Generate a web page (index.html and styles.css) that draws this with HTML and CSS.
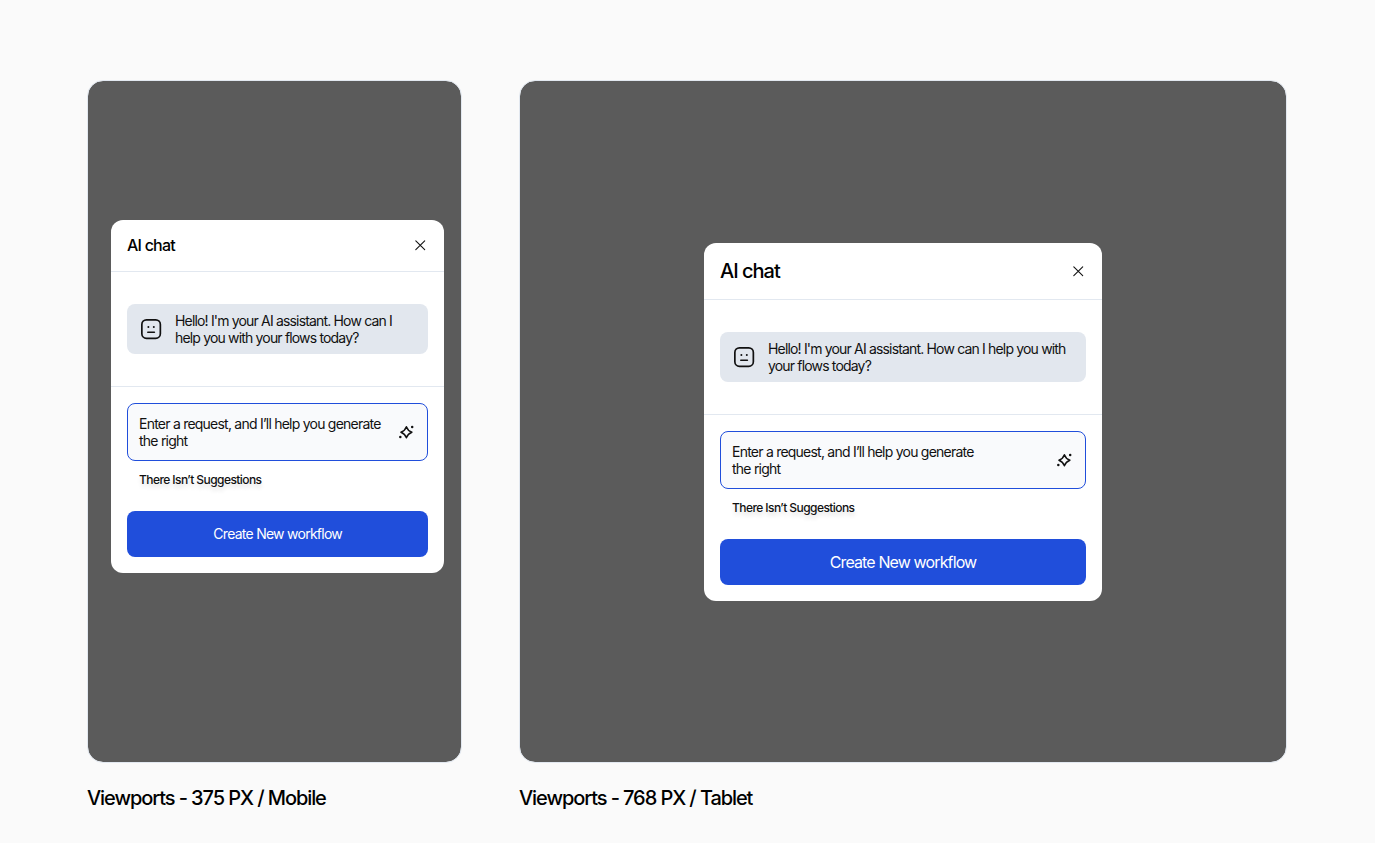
FILE: index.html
```
<!DOCTYPE html>
<html lang="en">
<head>
<meta charset="utf-8">
<title>AI chat viewports</title>
<link rel="stylesheet" href="styles.css">
</head>
<body>
<svg class="sprite" aria-hidden="true">
  <symbol id="close" viewBox="0 0 12 12"><path d="M1.8 1.8 10.7 10.7M10.7 1.8 1.8 10.7" fill="none" stroke="currentColor" stroke-width="1.1" stroke-linecap="round"/></symbol>
  <symbol id="bot" viewBox="0 0 22 22"><rect x="1.85" y="1.85" width="18.5" height="18.5" rx="4.6" fill="none" stroke="currentColor" stroke-width="1.7"/><circle cx="8.4" cy="9.1" r="1" fill="currentColor"/><circle cx="13.8" cy="9.1" r="1" fill="currentColor"/><path d="M7.8 14.2h6.6" stroke="currentColor" stroke-width="1.6" stroke-linecap="round"/></symbol>
  <symbol id="sparkle" viewBox="0 0 16 16"><path d="M8.4 2.7C9.4 5.6 11 7.2 13.9 8.2C11 9.2 9.4 10.8 8.4 13.7C7.4 10.8 5.8 9.2 2.9 8.2C5.8 7.2 7.4 5.6 8.4 2.7Z" fill="none" stroke="currentColor" stroke-width="1.45" stroke-linejoin="round"/><circle cx="14.2" cy="2.9" r="1.25" fill="currentColor"/><circle cx="2.3" cy="13.1" r="1.25" fill="currentColor"/></symbol>
</svg>
<main class="board">
  <figure class="viewport viewport--mobile">
    <div class="frame">
      <section class="modal">
        <header class="modal-head"><h2 class="title">AI chat</h2><svg class="icon-close"><use href="#close"/></svg></header>
        <div class="chat">
          <div class="bubble"><svg class="icon-bot"><use href="#bot"/></svg><p class="message">Hello! I'm your AI assistant. How can I<br>help you with your flows today?</p></div>
        </div>
        <div class="composer">
          <div class="prompt"><p class="prompt-text">Enter a request, and I’ll help you generate<br>the right</p><svg class="icon-sparkle"><use href="#sparkle"/></svg></div>
          <p class="hint">There Isn’t Suggestions</p>
          <button class="create"><span>Create New workflow</span></button>
        </div>
      </section>
    </div>
    <figcaption class="caption"><span>Viewports - 375 PX / Mobile</span></figcaption>
  </figure>
  <figure class="viewport viewport--tablet">
    <div class="frame">
      <section class="modal">
        <header class="modal-head"><h2 class="title">AI chat</h2><svg class="icon-close"><use href="#close"/></svg></header>
        <div class="chat">
          <div class="bubble"><svg class="icon-bot"><use href="#bot"/></svg><p class="message">Hello! I'm your AI assistant. How can I help you with<br>your flows today?</p></div>
        </div>
        <div class="composer">
          <div class="prompt"><p class="prompt-text">Enter a request, and I’ll help you generate<br>the right</p><svg class="icon-sparkle"><use href="#sparkle"/></svg></div>
          <p class="hint">There Isn’t Suggestions</p>
          <button class="create"><span>Create New workflow</span></button>
        </div>
      </section>
    </div>
    <figcaption class="caption"><span>Viewports - 768 PX / Tablet</span></figcaption>
  </figure>
</main>
</body>
</html>
```
FILE: styles.css
```
* { box-sizing: border-box; margin: 0; padding: 0; }
body { background: #fafafa; color: #111; font-family: Inter, "Liberation Sans", sans-serif; }
.sprite { display: none; }
.board { display: flex; gap: 57px; padding: 80px 0 0 87px; height: 843px; overflow: hidden; }
.viewport { flex: none; }
.viewport--mobile { width: 375px; }
.viewport--tablet { width: 768px; }
.frame { height: 683px; display: flex; border: 1px solid #e2e8f0; border-radius: 16px; background: #5b5b5b; background-clip: padding-box; }
.viewport--mobile .frame { padding: 139px 0 0 23px; align-items: flex-start; }
.viewport--tablet .frame { padding-top: 162px; justify-content: center; align-items: flex-start; }
.modal { width: 398px; background: #fff; border-radius: 12px; }
.viewport--mobile .modal { width: 333.4px; }
.modal-head { height: 57px; padding: 0 18px 0 16px; display: flex; align-items: center; justify-content: space-between; border-bottom: 1px solid #e2e8f0; }
.viewport--mobile .modal-head { height: 52px; padding-bottom: 1px; }
.title { font-size: 20px; font-weight: 500; letter-spacing: -1px; color: #000; }
.viewport--mobile .title { font-size: 16px; letter-spacing: -0.77px; }
.icon-close { width: 12px; height: 12px; }
.chat { height: 115px; padding: 32px 16px; border-bottom: 1px solid #e2e8f0; }
.bubble { height: 50px; display: flex; align-items: center; gap: 13px; padding-left: 13px; border-radius: 8px; background: #e2e7ee; }
.icon-bot { width: 22px; height: 22px; flex: none; }
.message, .prompt-text { font-size: 14px; font-weight: 400; line-height: 17px; letter-spacing: -0.83px; white-space: nowrap; }
.prompt-text { letter-spacing: -0.77px; }
.composer { padding: 16px; }
.prompt { height: 58px; display: flex; align-items: center; justify-content: space-between; padding: 0 13px 0 11px; border: 1px solid #204edb; border-radius: 8px; background: #f9fafc; }
.icon-sparkle { width: 16px; height: 16px; }
.hint { height: 50px; padding: 11px 0 0 12px; font-size: 12px; font-weight: 500; line-height: 16px; letter-spacing: -0.57px; text-shadow: 0 4px 4px rgba(0, 0, 0, .12); }
.create { display: block; width: 100%; height: 46px; border: 0; border-radius: 8px; background: #204edb; color: #fff; font: 400 16px/20px Inter, "Liberation Sans", sans-serif; letter-spacing: -0.87px; }
.viewport--mobile .create { font-size: 14px; letter-spacing: -0.74px; }
.caption { margin-top: 23px; font-size: 20px; font-weight: 500; line-height: 25px; letter-spacing: -1.08px; color: #000; white-space: nowrap; }
```
